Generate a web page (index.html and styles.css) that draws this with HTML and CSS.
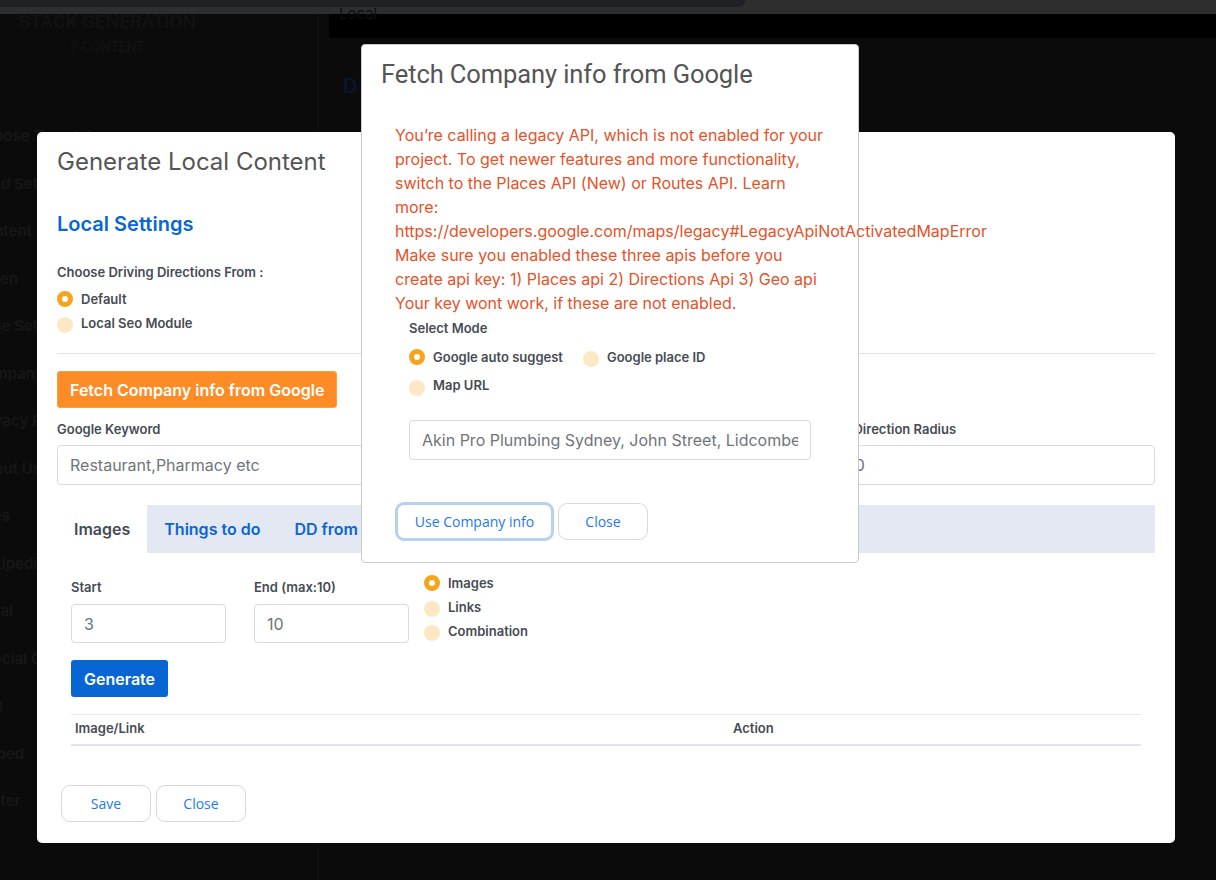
FILE: index.html
```html
<!DOCTYPE html>
<html lang="en">
<head>
<meta charset="utf-8">
<title>Generate Local Content</title>
<link rel="stylesheet" href="styles.css">
</head>
<body>
<div class="chrome"><div class="chrome-tab"></div></div>
<div class="app">
  <aside class="sidebar">
    <div class="brand">
      <div class="brand-title">STACK GENERATION</div>
      <div class="brand-sub">7 CONTENT</div>
    </div>
    <ul class="nav">
      <li>Choose Template</li>
      <li>Build Settings</li>
      <li>Content</li>
      <li>Token</li>
      <li>Page Settings</li>
      <li>Company</li>
      <li>Privacy Policy</li>
      <li>About Us</li>
      <li>Sites</li>
      <li>Wikipedia</li>
      <li>Local</li>
      <li>Special Content</li>
      <li>FAQ</li>
      <li>Embed</li>
      <li>Footer</li>
    </ul>
  </aside>
  <main class="main">
    <div class="main-bar"><span>Local</span></div>
    <div class="main-body"><span class="ghost">D</span></div>
  </main>
</div>

<section class="modal modal-local">
  <header class="modal-head"><h2 class="modal-title">Generate Local Content</h2></header>
  <div class="modal-body">
    <h3 class="section-title">Local Settings</h3>
    <div class="label">Choose Driving Directions From :</div>
    <div class="radio-list">
      <label class="radio-row"><span class="radio on"></span>Default</label>
      <label class="radio-row"><span class="radio"></span>Local Seo Module</label>
    </div>
    <hr class="sep">
    <button class="btn-orange">Fetch Company info from Google</button>
    <div class="field-grid">
      <div class="field">
        <div class="label">Google Keyword</div>
        <input class="input" placeholder="Restaurant,Pharmacy etc">
      </div>
      <div class="field">
        <div class="label">Google Radius</div>
        <input class="input" value="1000">
      </div>
      <div class="field">
        <div class="label">Driving Direction Radius</div>
        <input class="input radius-input" value="10000">
      </div>
    </div>
    <nav class="tabs">
      <span class="tab active">Images</span>
      <span class="tab">Things to do</span>
      <span class="tab">DD from Company</span>
    </nav>
    <div class="tab-pane">
      <div class="range-row">
        <div class="range-field">
          <div class="label">Start</div>
          <input class="input small" value="3">
        </div>
        <div class="range-field">
          <div class="label">End (max:10)</div>
          <input class="input small" value="10">
        </div>
        <div class="radio-list tight">
          <label class="radio-row"><span class="radio on"></span>Images</label>
          <label class="radio-row"><span class="radio"></span>Links</label>
          <label class="radio-row"><span class="radio"></span>Combination</label>
        </div>
      </div>
      <button class="btn-blue">Generate</button>
      <table class="table">
        <thead><tr><th class="col-a">Image/Link</th><th>Action</th></tr></thead>
        <tbody></tbody>
      </table>
    </div>
  </div>
  <footer class="modal-foot">
    <button class="btn-light">Save</button>
    <button class="btn-light">Close</button>
  </footer>
</section>

<section class="modal modal-fetch">
  <header class="fetch-head"><h2 class="fetch-title">Fetch Company info from Google</h2></header>
  <div class="fetch-body">
    <p class="error">You’re calling a legacy API, which is not enabled for your project. To get newer features and more functionality, switch to the Places API (New) or Routes API. Learn more: https://developers.google.com/maps/legacy#LegacyApiNotActivatedMapError<br>Make sure you enabled these three apis before you create api key: 1) Places api 2) Directions Api 3) Geo api<br>Your key wont work, if these are not enabled.</p>
    <div class="fetch-form">
      <div class="label">Select Mode</div>
      <div class="mode-row mode-first">
        <label class="radio-row"><span class="radio on"></span>Google auto suggest</label>
        <label class="radio-row"><span class="radio"></span>Google place ID</label>
      </div>
      <div class="mode-row">
        <label class="radio-row"><span class="radio low"></span>Map URL</label>
      </div>
      <input class="input fetch-input" placeholder="Akin Pro Plumbing Sydney, John Street, Lidcombe NSW, Australia">
    </div>
    <div class="fetch-actions">
      <button class="btn-light focus">Use Company info</button>
      <button class="btn-light">Close</button>
    </div>
  </div>
</section>
</body>
</html>
```

FILE: styles.css
```css
* { box-sizing: border-box; }
html, body { margin: 0; padding: 0; }
body {
  width: 1216px;
  height: 880px;
  overflow: hidden;
  background: #0b0b0b;
  font-family: Inter, "Noto Sans", sans-serif;
  position: relative;
}

/* browser chrome strip */
.chrome { height: 14px; background: #2e2e2e; }
.chrome-tab { height: 7px; width: 745px; background: #202125; border-bottom-right-radius: 7px; }

.app { display: flex; height: 866px; }
.sidebar {
  width: 318px;
  border-right: 1px solid #111;
  background: #0b0b0b;
  overflow: hidden;
}
.brand { text-align: center; width: 215px; color: #131313; }
.brand-title { font-size: 19px; line-height: 16px; font-family: Roboto, sans-serif; }
.brand-sub { font-size: 14px; margin-top: 9px; font-family: Roboto, sans-serif; }
.nav { list-style: none; margin: 71px 0 0 -26px; padding: 0; }
.nav li {
  color: #171717;
  font-weight: 600;
  font-size: 15px;
  height: 47.5px;
  line-height: 20px;
}
.main { flex: 1; margin-left: 11px; }
.main-bar { height: 24px; background: #000; color: #0e0e0e; font-size: 15px; padding-left: 10px; line-height: 0; }
.main-body { padding: 36px 0 0 14px; }
.ghost { color: #081430; font-size: 20px; font-weight: 600; }

/* modals */
.modal { position: absolute; background: #fff; }
.modal-local {
  left: 37px; top: 132px; width: 1138px; height: 711px;
  border-radius: 5px;
}
.modal-head { padding: 15px 20px 0; }
.modal-title { margin: 0; font-size: 24px; line-height: 30px; font-weight: 400; color: #555; }
.modal-body { padding: 0 20px; }
.section-title { margin: 34px 0 0; font-size: 20px; line-height: 26px; font-weight: 600; color: #0a66d1; }
.label { font-size: 13px; line-height: 18px; font-weight: 600; color: #464c54; }
.modal-body > .label { margin-top: 26px; }
.radio-list { display: flex; flex-direction: column; margin-top: 6px; }
.radio-row {
  display: flex; align-items: center; gap: 8px;
  height: 24px;
  font-size: 13px; font-weight: 600; color: #464c54;
}
.radio {
  width: 16px; height: 16px; border-radius: 50%;
  background: #fde8c5;
  flex: none;
  margin-top: 3px;
}
.radio.on { background: #fff; border: 5px solid #f7a41b; margin-top: 0; }
.sep { border: 0; border-top: 1px solid #dfe3ea; margin: 18px 0 0; }
.btn-orange {
  display: block;
  margin-top: 17px;
  height: 37px;
  padding: 0 12px;
  background: #fd8c27;
  border: 1px solid #f9a23c;
  border-radius: 3px;
  color: #fff;
  font-family: Inter, sans-serif;
  font-size: 16px;
  font-weight: 600;
}
.field-grid { display: grid; grid-template-columns: repeat(3, 1fr); column-gap: 24px; margin-top: 12px; }
.field .label { margin-bottom: 7px; }
.input {
  display: block;
  width: 100%;
  height: 40px;
  border: 1px solid #d5dbe6;
  border-radius: 4px;
  padding: 0 12px;
  font-family: Inter, sans-serif;
  font-size: 16px;
  color: #6c737b;
  background: #fff;
  outline: none;
}
.input::placeholder { color: #6f757c; }
.tabs { display: flex; margin-top: 20px; height: 48px; background: #e3e8f2; }
.tab {
  padding: 0 17px;
  line-height: 48px;
  font-size: 16px; font-weight: 600; color: #0a66d1;
  white-space: nowrap;
}
.tab.active { background: #fff; color: #464c54; }
.tab-pane { padding: 25px 14px 0; }
.range-row { display: flex; gap: 28px; align-items: flex-start; }
.range-field { width: 155px; }
.range-field .label { margin-bottom: 8px; }
.input.small { height: 39px; }
.radio-list.tight { margin: -7px 0 0 -13px; }
.btn-blue {
  display: block;
  margin-top: 17px;
  height: 37px;
  padding: 0 13px;
  background: #0866d4;
  border: 0;
  border-radius: 3px;
  color: #fff;
  font-family: Inter, sans-serif;
  font-size: 16px;
  font-weight: 600;
}
.table { width: 100%; margin-top: 17px; border-collapse: collapse; }
.table th {
  text-align: left;
  height: 30px;
  padding: 0 4px 2px;
  font-size: 13px; font-weight: 600; color: #464c54;
  border-top: 1px solid #e3e7ee;
  border-bottom: 2px solid #dfe5f0;
}
.table .col-a { width: 658px; }
.modal-foot { position: absolute; left: 24px; top: 653px; display: flex; gap: 5px; }
.btn-light {
  height: 37px;
  width: 90px;
  background: #fff;
  border: 1px solid #d9d9d9;
  border-radius: 9px;
  color: #1e79ec;
  font-family: "Open Sans", sans-serif;
  font-size: 14px;
}

/* fetch modal */
.modal-fetch {
  left: 361px; top: 44px; width: 498px; height: 519px;
  border: 1px solid #c9c9c9;
  border-radius: 4px;
}
.fetch-head { padding: 14px 19px 0; }
.fetch-title { margin: 0; font-family: Roboto, sans-serif; font-size: 25.5px; line-height: 30px; font-weight: 400; color: #555; letter-spacing: -0.1px; }
.fetch-body { padding: 0 33px; }
.error {
  margin: 34px 0 0;
  width: 432px;
  font-size: 16px;
  line-height: 24px;
  color: #e5522a;
}
.fetch-form { padding: 0 14px; margin-top: 3px; }
.fetch-form > .label { line-height: 20px; }
.mode-row { display: flex; gap: 20px; height: 28px; align-items: center; }
.mode-row.mode-first { margin-top: 5px; }
.radio.low { margin-top: 5px; }
.fetch-input { margin-top: 21px; width: 402px; padding-right: 12px; }
.fetch-actions { display: flex; gap: 4px; margin-top: 42px; }
.btn-light.focus { width: 159px; height: 39px; border: 3px solid #b7d0ee; }
.fetch-actions .btn-light:last-child { margin-top: 1px; }
```
